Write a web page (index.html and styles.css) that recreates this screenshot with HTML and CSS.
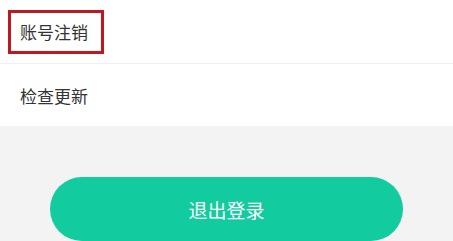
FILE: index.html
```html
<!DOCTYPE html>
<html lang="zh-CN">

<head>
    <meta charset="UTF-8" />
    <meta name="viewport" content="width=device-width, initial-scale=1.0" />
    <title>设置</title>
    <link rel="stylesheet" href="styles.css">
</head>

<body>

    <ul class="setting-list">
        <li class="setting-item">
            <span class="item-label">账号注销</span>
            <!-- 标注框 -->
            <span class="mark-box" aria-hidden="true"></span>
        </li>
        <li class="setting-item">
            <span class="item-label">检查更新</span>
        </li>
    </ul>

    <div class="logout-wrapper">
        <button class="logout-btn">退出登录</button>
    </div>

</body>

</html>
```

FILE: styles.css
```css
* {
    box-sizing: border-box;
}

body {
    margin: 0;
    background-color: #f3f3f3;
    font-family: "Noto Sans CJK SC", "Noto Sans", sans-serif;
}

.setting-list {
    margin: 0;
    padding: 0;
    list-style: none;
    background-color: #fff;
}

.setting-item {
    position: relative;
    display: flex;
    align-items: center;
    height: 63px;
    padding: 0 20px;
    font-size: 17px;
    color: #333;
}

.setting-item + .setting-item {
    border-top: 1px solid #efefef;
}

.mark-box {
    position: absolute;
    left: 8px;
    top: 10px;
    width: 96px;
    height: 44px;
    border: 3px solid #c0181e;
    pointer-events: none;
}

.logout-wrapper {
    display: flex;
    justify-content: center;
    padding-top: 51px;
}

.logout-btn {
    width: 353px;
    height: 64px;
    border: none;
    border-radius: 32px;
    background-color: #12cc9f;
    color: #fff;
    font-family: inherit;
    font-size: 19px;
    cursor: pointer;
}
```
